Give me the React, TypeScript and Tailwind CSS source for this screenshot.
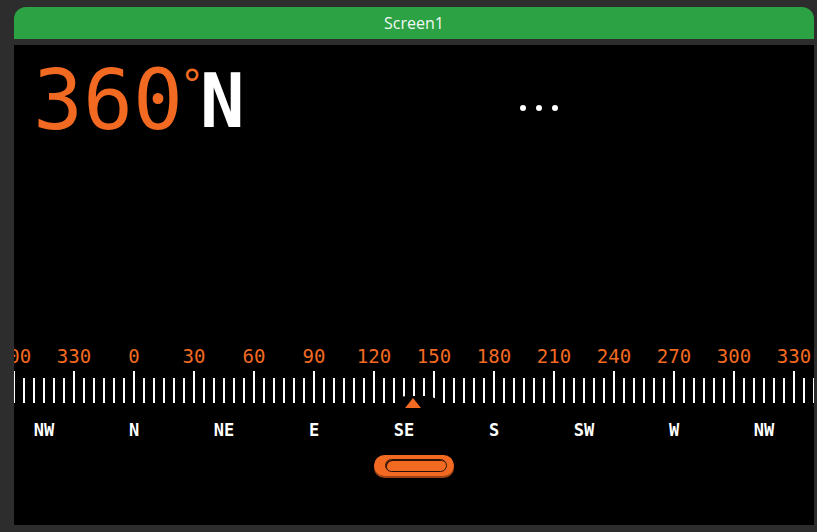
const ORANGE = '#f26a21';

const DEGREES = [300, 330, 0, 30, 60, 90, 120, 150, 180, 210, 240, 270, 300, 330];
const DIRECTIONS = ['NW', 'N', 'NE', 'E', 'SE', 'S', 'SW', 'W', 'NW'];

// 2px per degree, 0° sits 120px in from the panel's left edge
const ZERO_X = 120;

function Tape() {
  const ticks = Array.from({ length: 81 }, (_, i) => i);
  return (
    <div className="relative h-[95px] w-full overflow-hidden">
      {DEGREES.map((d, i) => (
        <span
          key={`d${i}`}
          className="absolute top-0 -translate-x-1/2 text-[19px] leading-[22px] text-[#f26a21]"
          style={{ left: i * 60, fontFamily: '"DejaVu Sans Mono", monospace' }}
        >
          {d}
        </span>
      ))}
      {ticks.map((i) => {
        const major = i % 6 === 0;
        return (
          <div
            key={`t${i}`}
            className={`absolute w-[2px] bg-white ${major ? 'top-[26px] h-[32px]' : 'top-[33px] h-[25px]'}`}
            style={{ left: i * 10 - 1 }}
          />
        );
      })}
      {/* pointer, with a little black cut-out over the ticks */}
      <div className="absolute left-[379px] top-[51px] h-[16px] w-[48px] rounded-t-[14px] bg-black" />
      <svg className="absolute left-[391px] top-[53px]" width="16" height="10" viewBox="0 0 16 10">
        <polygon points="8,0 16,10 0,10" fill={ORANGE} />
      </svg>
      {DIRECTIONS.map((d, i) => (
        <span
          key={`c${i}`}
          className="absolute top-[74px] -translate-x-1/2 text-[17px] font-bold leading-[22px] text-white"
          style={{ left: ZERO_X - 90 + i * 90, fontFamily: '"DejaVu Sans Mono", monospace' }}
        >
          {d}
        </span>
      ))}
    </div>
  );
}

export default function App() {
  return (
    <div className="h-[532px] w-[817px] bg-[#2d2d2d] pl-[14px] pt-[7px]">
      <div className="flex h-[32px] w-[800px] items-center justify-center rounded-t-[12px] bg-[#2ca244]">
        <span className="text-[16px] text-[#f3f8f3]" style={{ fontFamily: '"Open Sans", sans-serif' }}>
          Screen1
        </span>
      </div>
      <div className="mt-[6px] flex h-[480px] w-[800px] flex-col bg-black">
        <div className="flex h-[300px] items-start">
          <div className="ml-[19px] mt-[8px] flex items-start" style={{ fontFamily: '"DejaVu Sans Mono", monospace' }}>
            <span className="text-[83px] leading-[96px] text-[#f26a21]">360</span>
            <span className="-ml-[3px] mt-[12px] text-[40px] leading-[40px] text-[#f26a21]">°</span>
            <span className="-ml-[4px] text-[74px] font-bold leading-[96px] text-white">N</span>
          </div>
          <div className="ml-auto mr-[256px] mt-[60px] flex gap-[10px]">
            <div className="h-[6px] w-[6px] rounded-full bg-white" />
            <div className="h-[6px] w-[6px] rounded-full bg-white" />
            <div className="h-[6px] w-[6px] rounded-full bg-white" />
          </div>
        </div>
        <Tape />
        <div className="mt-[15px] flex justify-center">
          <div className="flex h-[21px] w-[80px] items-center justify-center rounded-full bg-[#f26a21] shadow-[0_2px_0_#9c4214]">
            <div className="ml-[3px] h-[13px] w-[62px] rounded-full border-[1.5px] border-[#2a1206] bg-[#f26a21] shadow-[inset_1px_1px_0_#2a1206]" />
          </div>
        </div>
      </div>
    </div>
  );
}
